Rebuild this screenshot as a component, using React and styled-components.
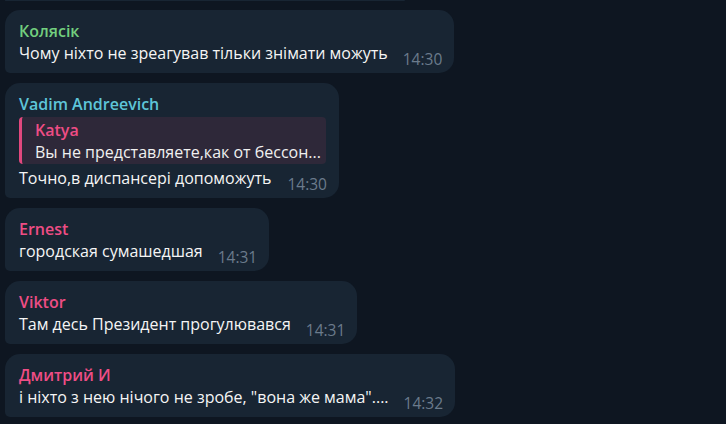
import React from 'react'
import styled, { createGlobalStyle } from 'styled-components'

const messages = [
  { name: 'Колясік', color: '#72cf7e', text: 'Чому ніхто не зреагував тільки знімати можуть', time: '14:30' },
  {
    name: 'Vadim Andreevich',
    color: '#5ec5d9',
    reply: { name: 'Katya', text: 'Вы не представляете,как от бессон...' },
    text: 'Точно,в диспансері допоможуть',
    time: '14:30',
  },
  { name: 'Ernest', color: '#ee4d85', text: 'городская сумашедшая', time: '14:31' },
  { name: 'Viktor', color: '#ee4d85', text: 'Там десь Президент прогулювався', time: '14:31' },
  { name: 'Дмитрий И', color: '#ee4d85', text: 'і ніхто з нею нічого не зробе, "вона же мама"....', time: '14:32' },
]

const App = () => (
  <>
    <GlobalStyle />
    <Chat>
      <PrevBubble />
      {messages.map((m, i) => (
        <Bubble key={i}>
          <Name color={m.color}>{m.name}</Name>
          {m.reply && (
            <Reply>
              <ReplyName>{m.reply.name}</ReplyName>
              <ReplyText>{m.reply.text}</ReplyText>
            </Reply>
          )}
          <Row>
            <Text>{m.text}</Text>
            <Time>{m.time}</Time>
          </Row>
        </Bubble>
      ))}
    </Chat>
  </>
)

export default App

const GlobalStyle = createGlobalStyle`
  html, body {
    margin: 0;
    background: #0e1621;
  }
`

const Chat = styled.div`
  display: flex;
  flex-direction: column;
  align-items: flex-start;
  gap: 10px;
  width: 726px;
  height: 424px;
  overflow: hidden;
  padding: 0 0 0 5px;
  box-sizing: border-box;
  background: #0e1621;
  font-family: 'Open Sans', 'Noto Sans', sans-serif;
`

const PrevBubble = styled.div`
  width: 400px;
  height: 1px;
  margin-bottom: -1px;
  background: #182533;
  border-radius: 0 0 10px 4px;
`

const Bubble = styled.div`
  display: flex;
  flex-direction: column;
  background: #182533;
  border-radius: 15px 15px 15px 5px;
  padding: 10px 12px 9px 14px;
  color: #f5f5f5;
`

const Name = styled.div`
  color: ${({ color }) => color};
  font-size: 16px;
  font-weight: 600;
  line-height: 22px;
`

const Reply = styled.div`
  margin: 2px 1px 3px 0;
  padding: 2px 5px 1px 13px;
  background: #2e2839;
  border-left: 3px solid #e2487e;
  border-radius: 4px;
  line-height: 22px;
  font-size: 16px;
`

const ReplyName = styled.div`
  color: #ee4d85;
  font-weight: 600;
`

const ReplyText = styled.div`
  color: #f0f0f0;
`

const Row = styled.div`
  display: flex;
  align-items: flex-end;
  justify-content: space-between;
  gap: 15px;
`

const Text = styled.div`
  font-size: 16px;
  line-height: 22px;
`

const Time = styled.div`
  font-size: 15.5px;
  color: #6b7b8c;
  line-height: 20px;
  margin-bottom: -5px;
`
